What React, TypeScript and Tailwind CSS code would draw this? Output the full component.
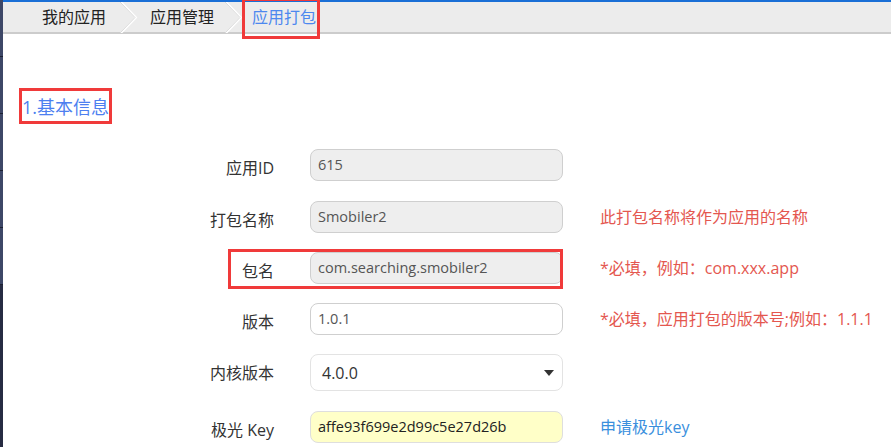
const font = { fontFamily: '"Open Sans", "Noto Sans CJK SC", sans-serif' };

type Row = {
  label: string;
  value: string;
  kind: "readonly" | "text" | "select" | "key";
  hint?: string;
  hintTone?: "red" | "blue";
  marked?: boolean;
  spacing: string;
};

const rows: Row[] = [
  { label: "应用ID", value: "615", kind: "readonly", spacing: "mt-0" },
  { label: "打包名称", value: "Smobiler2", kind: "readonly", hint: "此打包名称将作为应用的名称", hintTone: "red", spacing: "mt-[20px]" },
  { label: "包名", value: "com.searching.smobiler2", kind: "readonly", hint: "*必填，例如：com.xxx.app", hintTone: "red", marked: true, spacing: "mt-[19px]" },
  { label: "版本", value: "1.0.1", kind: "text", hint: "*必填，应用打包的版本号;例如：1.1.1", hintTone: "red", spacing: "mt-[19px]" },
  { label: "内核版本", value: "4.0.0", kind: "select", spacing: "mt-[19px]" },
  { label: "极光 Key", value: "affe93f699e2d99c5e27d26b", kind: "key", hint: "申请极光key", hintTone: "blue", spacing: "mt-[20px]" },
];

function Chevron() {
  return (
    <svg width="18" height="31" viewBox="0 0 18 31" fill="none" className="shrink-0">
      <path d="M1 0l15 15.5L1 31" stroke="#ffffff" strokeWidth="2" />
      <path d="M0 0l15 15.5L0 31" stroke="#d9d9d9" strokeWidth="1" />
    </svg>
  );
}

function Sidebar() {
  return (
    <div className="flex w-[3px] shrink-0 flex-col bg-[#262b42]">
      {[0, 1, 2, 3, 4].map((i) => (
        <div key={i} className="h-[57px] border-b border-[#1c2033] bg-[#3d4767]" />
      ))}
    </div>
  );
}

function Field({ row }: { row: Row }) {
  const base = "flex h-[32px] w-[253px] shrink-0 items-center rounded-[8px] border pl-[7px] text-[14.5px]";
  if (row.kind === "select") {
    return (
      <div className="flex h-[37px] w-[253px] shrink-0 items-center justify-between rounded-[8px] border border-[#e3e3e3] bg-white pl-[11px] pr-[8px] text-[16px] text-[#333]">
        <span>{row.value}</span>
        <svg width="10" height="6" viewBox="0 0 10 6">
          <path d="M0 0h10L5 6z" fill="#333" />
        </svg>
      </div>
    );
  }
  if (row.kind === "key") {
    return <div className={`${base} border-[#dedede] bg-[#ffffc8] text-[#222]`}>{row.value}</div>;
  }
  if (row.kind === "text") {
    return <div className={`${base} border-[#cfcfcf] bg-white text-[#555]`}>{row.value}</div>;
  }
  return <div className={`${base} border-[#cfcfcf] bg-[#eeeeee] text-[#555]`}>{row.value}</div>;
}

function FormRow({ row }: { row: Row }) {
  return (
    <div className={`relative flex items-center ${row.spacing}`}>
      <span
        className={`w-[271px] shrink-0 text-right text-[16px] text-[#333] ${row.kind === "select" ? "pt-[1px]" : "pt-[6px]"}`}
      >
        {row.label}
      </span>
      <div className="ml-[36px]">
        <Field row={row} />
      </div>
      {row.hint && (
        <span
          className={`ml-[37px] text-[16px] ${row.hintTone === "blue" ? "text-[#3a8fdd]" : "text-[#e4574f]"}`}
        >
          {row.hint}
        </span>
      )}
      {/* annotation box */}
      {row.marked && (
        <div className="pointer-events-none absolute left-[225px] top-[-3px] h-[40px] w-[335px] border-[3px] border-[#f03a3a]" />
      )}
    </div>
  );
}

export default function App() {
  return (
    <div className="flex h-[447px] w-[891px] overflow-hidden bg-white" style={font}>
      <Sidebar />
      <div className="flex min-w-0 flex-1 flex-col">
        {/* Breadcrumb bar */}
        <div className="flex h-[34px] shrink-0 items-center border-t-2 border-b-2 border-t-[#1a6fd6] border-b-[#cccccc] bg-[#ececec] text-[16px] text-[#222]">
          <span className="ml-[39px]">我的应用</span>
          <div className="ml-[14px] mr-[12px]">
            <Chevron />
          </div>
          <span>应用管理</span>
          <div className="ml-[11px] mr-[9px]">
            <Chevron />
          </div>
          <span className="relative text-[#4d88ef]">
            应用打包
            <span className="pointer-events-none absolute left-[-10px] right-[-4px] top-[-7px] bottom-[-10px] border-[3px] border-[#f03a3a]" />
          </span>
        </div>

        {/* Section heading */}
        <div className="mt-[54px] ml-[16px] flex">
          <h2 className="border-[3px] border-[#f03a3a] pt-[3px] pb-[1px] text-[18px] leading-[26px] text-[#4d7ff0]">1.基本信息</h2>
        </div>

        {/* Form */}
        <div className="mt-[25px] flex flex-col">
          {rows.map((row) => (
            <FormRow key={row.label} row={row} />
          ))}
        </div>
      </div>
    </div>
  );
}
